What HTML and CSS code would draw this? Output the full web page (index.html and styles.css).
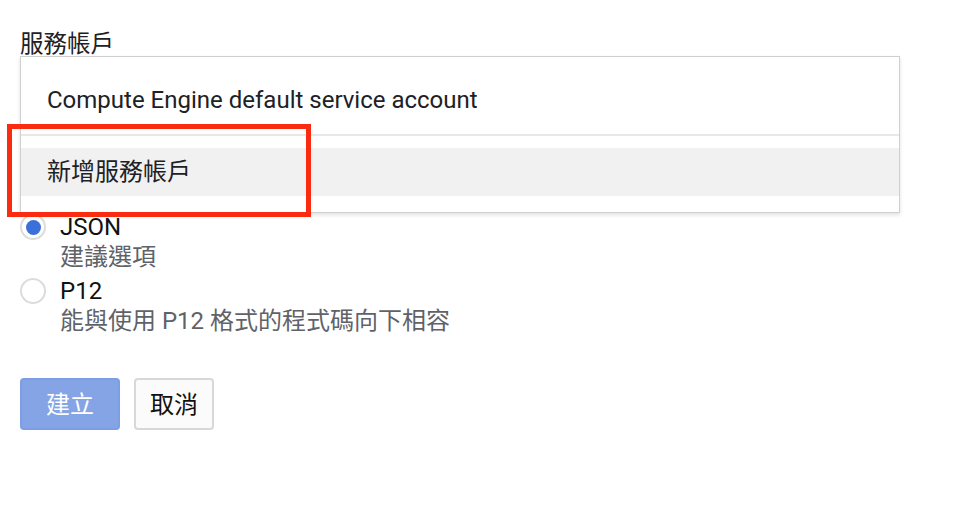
FILE: index.html
```html
<!DOCTYPE html>
<html lang="zh-Hant">
<head>
  <meta charset="UTF-8" />
  <meta name="viewport" content="width=device-width, initial-scale=1.0"/>
  <title>建立私密金鑰</title>
  <link rel="stylesheet" href="styles.css">
</head>
<body>

  <div class="form">
    <!-- Service account picker -->
    <div class="field-label">服務帳戶</div>
    <div class="menu">
      <div class="menu-item">Compute Engine default service account</div>
      <div class="menu-divider"></div>
      <div class="menu-item active">新增服務帳戶</div>
      <div class="callout"></div>
    </div>

    <!-- Key type -->
    <div class="radio-group">
      <label class="option">
        <span class="radio checked"></span>
        <span class="option-text">
          <span class="option-title">JSON</span>
          <span class="option-desc">建議選項</span>
        </span>
      </label>
      <label class="option">
        <span class="radio"></span>
        <span class="option-text">
          <span class="option-title">P12</span>
          <span class="option-desc">能與使用 P12 格式的程式碼向下相容</span>
        </span>
      </label>
    </div>

    <!-- Actions -->
    <div class="actions">
      <button class="btn btn-primary">建立</button>
      <button class="btn">取消</button>
    </div>
  </div>

</body>
</html>
```

FILE: styles.css
```css
body {
  margin: 0;
  background-color: #ffffff;
  color: #202124;
  font-family: Roboto, "Noto Sans CJK TC", sans-serif;
}

.form {
  padding: 30px 0 0 20px;
  width: 880px;
}

.field-label {
  font-size: 23.5px;
  line-height: 28px;
  height: 26px;
}

.menu {
  position: relative;
  background-color: #ffffff;
  border: 1px solid #cfcfcf;
  box-shadow: 0 2px 4px rgba(0,0,0,0.12);
  padding: 19px 0 16px 0;
}

.menu-item {
  height: 48px;
  line-height: 48px;
  padding-left: 26px;
  font-size: 24px;
  color: #202124;
}

.menu-item.active {
  background-color: #f1f1f1;
}

.menu-divider {
  height: 2px;
  background-color: #e8e8e8;
  margin: 10px 0 12px 0;
}

.callout {
  position: absolute;
  left: -14px;
  top: 67px;
  width: 294px;
  height: 83px;
  border: 5px solid #fb2b12;
}

.radio-group {
  display: flex;
  flex-direction: column;
  gap: 5px;
}

.option {
  display: flex;
  align-items: flex-start;
  gap: 14px;
}

.radio {
  box-sizing: border-box;
  width: 26px;
  height: 26px;
  margin-top: 1px;
  border: 2px solid #dcdcdc;
  border-radius: 50%;
  display: flex;
  align-items: center;
  justify-content: center;
  flex-shrink: 0;
}

.radio.checked::after {
  content: "";
  width: 15px;
  height: 15px;
  border-radius: 50%;
  background-color: #3b6fd9;
}

.option-text {
  display: flex;
  flex-direction: column;
}

.option-title {
  font-size: 24px;
  line-height: 28px;
  color: #111111;
}

.option-desc {
  font-size: 24px;
  line-height: 30px;
  margin-top: 1px;
  color: #5f6368;
}

.actions {
  display: flex;
  gap: 14px;
  margin-top: 42px;
}

.btn {
  box-sizing: border-box;
  height: 52px;
  width: 80px;
  padding: 0 0 4px 0;
  font-family: Roboto, "Noto Sans CJK TC", sans-serif;
  font-size: 24px;
  color: #111111;
  background-color: #fbfbfb;
  border: 2px solid #d8d8d8;
  border-radius: 4px;
  cursor: pointer;
}

.btn-primary {
  width: 100px;
  color: #ffffff;
  background-color: #85a4e6;
  border-color: #7d9de4;
}
```
